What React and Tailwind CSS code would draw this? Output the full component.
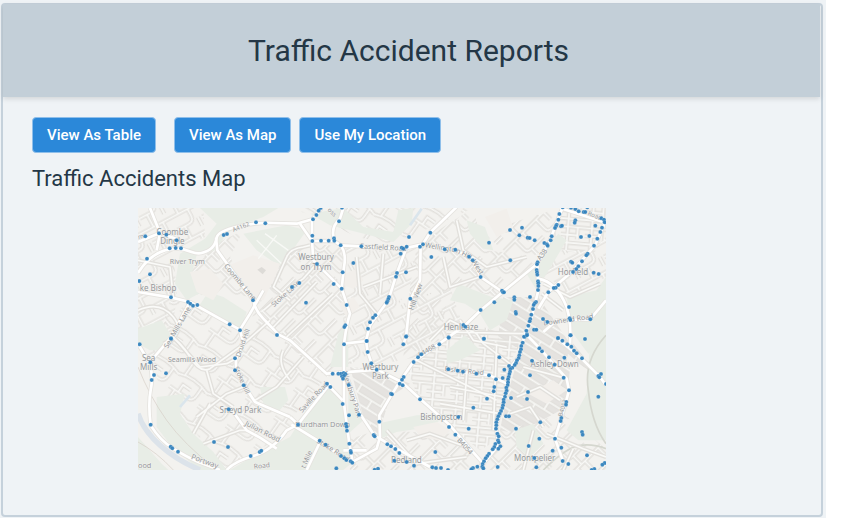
import React from "react";

// Map drawing units: three per CSS pixel.
const VIEW = { x: 24, y: 23, width: 1404, height: 786 };

const GREENS = [
  "M210 23H445L400 50L330 75L290 100L255 150L200 165L185 220L225 270L170 300L135 250L150 160L225 115L260 70Z",
  "M340 100L470 75L530 90L480 160L460 200L430 185L380 150Z",
  "M235 275L280 290L350 335L335 385L300 372L205 320Z",
  "M24 385L95 360L120 400L90 450L60 450L24 430Z",
  "M80 590L165 580L150 640L190 700L250 755L290 809H210L130 745L80 680Z",
  "M24 710L95 790L115 809H24Z",
  "M390 560L465 560L475 600L440 640L400 610Z",
  "M540 40L640 23L700 80L790 95L805 30L850 23L845 70L790 125L720 105L600 75Z",
  "M625 400L655 360V500H600Z",
  "M590 550L645 610L668 786L640 809H300L390 755L480 710L504 672Z",
  "M655 540L670 570L700 660L655 700Z",
  "M1010 60L1065 80L1090 150L1060 145L1020 100Z",
  "M1245 150L1285 100L1310 120L1220 270L1190 220Z",
  "M985 250L1085 290L1150 300L1130 360L1080 390L1050 340L1005 310L960 300Z",
  "M950 450L1005 405L1050 450L990 480L950 490Z",
  "M1310 290L1400 270L1428 230V400L1375 460L1330 400Z",
  "M740 670L860 645L960 640L900 680L800 695L750 715Z",
  "M1380 430L1428 400V720L1345 720L1310 690L1370 580Z",
  "M1155 690L1210 670L1240 730L1200 770L1160 740Z",
];

const OPEN_GROUND = [
  "M285 200L370 165L450 190L440 220L400 300L370 290L310 220Z",
  "M180 215L240 205L280 250L250 300L200 275Z",
  "M635 225L680 205L700 240L670 265L640 255Z",
  "M1065 50L1130 25L1150 85L1100 110Z",
  "M850 680L920 665L960 690L930 720L870 710Z",
  "M1195 580L1270 540L1310 570L1250 610Z",
  "M625 310L670 290L690 320L650 350Z",
];

const DISTRICTS = [
  { fill: "url(#streetsA)", d: "M24 23H220L225 110L130 150L140 280L60 290L24 270Z" },
  { fill: "url(#streetsA)", d: "M24 280L140 300L120 420L60 480L24 430Z" },
  { fill: "url(#streetsB)", d: "M120 300L235 315L330 390L320 470L370 620L480 660V700L380 750L290 809L190 690L90 580L70 470Z" },
  { fill: "url(#streetsC)", d: "M258 130L340 90L300 170L365 290L250 275L160 300L180 215Z" },
  { fill: "url(#streetsC)", d: "M480 150L550 130L650 140L640 410L630 520L590 530L440 410L380 320L400 260Z" },
  { fill: "url(#streetsB)", d: "M380 330L590 530L480 660L370 620L320 480L335 392Z" },
  { fill: "url(#streetsA)", d: "M640 140L860 140L840 260L770 370L720 460L645 500L640 370Z" },
  { fill: "url(#streetsC)", d: "M860 140L940 80L1030 23L1060 150L1170 160L1210 190L1100 290L960 250L930 420L820 470L840 260Z" },
  { fill: "url(#streetsA)", d: "M740 350L860 290L960 260L1000 380L860 470L715 500Z" },
  { fill: "url(#streetsB)", d: "M480 23L560 50L680 110L780 130L860 100L1030 23Z" },
  { fill: "url(#streetsC)", d: "M1060 100L1170 60L1290 23L1240 150L1170 190Z" },
  { fill: "url(#streetsD)", d: "M1298 23H1428V110L1390 160L1260 150Z" },
  { fill: "url(#streetsA)", d: "M1260 150L1390 150L1428 110V230L1320 290L1220 230Z" },
  { fill: "url(#streetsE)", d: "M660 500L742 508L840 550L780 590L740 720L700 650Z" },
  { fill: "url(#streetsE)", d: "M1120 290H1225L1320 430L1300 530L1200 440L1100 440Z" },
  { fill: "url(#streetsD)", d: "M960 410L1060 380L1180 420L1130 500L1100 720L1050 750L960 680L860 580L830 500Z" },
  { fill: "url(#streetsC)", d: "M650 720L740 690L960 700L1060 790V809H660Z" },
  { fill: "url(#streetsE)", d: "M1180 420L1320 500L1310 620L1160 700L1110 690L1130 590Z" },
  { fill: "url(#streetsE)", d: "M1330 430L1420 540L1360 500L1290 440Z" },
  { fill: "url(#streetsC)", d: "M1110 690L1160 680L1300 640L1428 745V809H1060Z" },
];

const ROADS = [
  "M24 218C60 160 100 145 140 145S190 165 215 158S255 140 260 112S370 65 430 68L500 70L547 57L575 23",
  "M258 112L262 150L370 300Q375 330 400 355L445 402L480 420L590 520L640 516",
  "M24 275L125 292L180 305L300 372L330 388L340 430L318 475L318 510L342 555L375 605L480 650",
  "M330 388L360 340L400 270",
  "M180 305L120 415L60 485",
  "M24 430L60 490Q70 530 62 570T62 675Q90 720 130 745T205 785L270 809",
  "M300 622L350 690L390 712L440 745",
  "M290 809Q310 785 370 767T470 690L504 672",
  "M510 70L546 122L546 57M546 122H613L632 135Q650 160 642 200L635 265L660 340Q650 370 642 430V610L658 730L668 786",
  "M546 122L550 180L635 265",
  "M613 122Q600 80 630 55L640 23",
  "M632 135L694 138L820 145L878 132L900 97L980 20",
  "M878 132L945 147L975 147L1025 175L1052 230L1118 275",
  "M830 140L800 220L775 300L720 375L708 420L713 455L725 490L742 508",
  "M640 516L742 508L815 545L870 595L960 675L1020 745L1060 790",
  "M872 132L870 240L840 300L828 410L820 432",
  "M642 430L710 422",
  "M484 672L570 725L665 786L740 745L750 710L748 645L785 583L815 535L850 485L928 430L1005 375L1052 330L1118 275L1222 190L1260 120L1290 40L1298 23",
  "M590 550L638 600M640 750H710",
  "M504 672L600 550M504 672L480 650M530 809L570 725",
  "M655 540L690 640L733 705L800 745L900 800",
  "M1222 190L1225 270L1205 350L1182 410L1170 465L1138 505L1125 595L1098 675L1105 735L1060 790L1055 809",
  "M1225 235Q1280 245 1310 320Q1325 370 1320 430",
  "M1182 395L1230 445L1310 535L1317 570L1305 615L1275 715L1300 785",
  "M1225 325L1255 275L1325 215L1395 135L1428 60M1290 23L1420 65",
  "M1240 395L1280 360L1380 357L1428 300",
  "M1284 415L1355 475L1410 530L1428 555",
  "M960 510L1080 525L1130 550",
  "M60 23L90 98L80 150M24 125L90 98L150 120",
];

// Smaller streets that run between the main roads.
const LANES = [
  "M480 300L430 260L470 170Q480 145 520 140L540 135",
  "M400 330L470 270L520 235L560 190M430 380L560 245M470 410L610 280",
  "M120 410Q150 420 180 470T240 505L330 440L420 360",
  "M130 410L210 500L290 490L318 475M230 510L250 580L310 620",
  "M480 540Q440 490 460 450M375 600L440 560L520 470",
  "M200 650L290 580L340 560M190 700L240 610M220 730L330 690L350 690",
  "M24 330Q90 300 130 350T100 430M24 180L120 200L130 290",
  "M900 420L960 360L1040 400L1060 430L1140 490M950 395L1180 400",
  "M990 360L1030 420L1130 440M860 480L900 500L1100 600",
  "M700 260L860 200M680 170L690 280L740 340M760 160L750 280",
  "M940 170L960 260L1050 230M980 60L1000 150L1070 200L1190 170",
  "M1100 430L1090 690M1010 520L1000 660M960 560L1120 590M930 610L1110 640",
  "M1160 590L1230 560L1290 600M1140 640L1200 620L1240 680M1180 500L1310 535",
  "M830 720L900 700L1010 740M770 690L860 790L1010 770",
  "M1250 700L1360 745L1428 770M1210 690L1180 809M1330 745L1300 809",
  "M1240 250L1320 290L1410 250M1235 280L1300 330",
];

const LABELS = [
  ["Coombe", 127, 105, 0, 24], ["Dingle", 127, 132, 0, 24], ["ke Bishop", 84, 273, 0, 24],
  ["River Trym", 172, 192, 0, 21], ["A4162", 335, 85, -22, 18], ["Coombe Lane", 325, 250, 50, 21],
  ["Stoke Lane", 472, 285, -42, 21], ["Sea Mills Lane", 148, 385, -60, 21], ["m", 34, 114, -12, 18],
  ["Westbury", 558, 180, 0, 24], ["on Trym", 558, 210, 0, 24], ["Eastfield Road", 760, 148, 3, 21],
  ["Hill View", 864, 292, -70, 21],
  ["oss", 602, 40, 45, 18], ["Henleaze", 993, 388, 0, 24], ["Horfield", 1329, 224, 0, 24],
  ["A38", 1242, 167, -55, 21], ["Downend Road", 1316, 365, -8, 21], ["Road", 1392, 52, 22, 18],
  ["Sea", 56, 482, 0, 24], ["Mills", 56, 509, 0, 24], ["Seamills Wood", 186, 485, 0, 21],
  ["Druid Hill", 345, 430, -70, 20], ["Stoke Hill", 330, 542, 66, 20], ["Sneyd Park", 331, 637, 0, 24],
  ["Julian Road", 395, 700, 27, 22], ["Portway", 222, 790, 20, 22], ["ood", 44, 803, 0, 22],
  ["Westbury", 751, 508, 0, 24], ["Park", 751, 536, 0, 24], ["Westbury Park", 660, 585, 72, 21],
  ["Saville Road", 556, 595, -47, 21], ["Durdham Down", 578, 680, 0, 22], ["Stoke Road", 606, 755, 32, 21],
  ["Bishopston", 934, 658, 0, 24], ["Redland", 829, 788, 0, 24], ["A4468", 893, 457, -30, 20],
  ["Ashley Down", 1274, 501, 0, 24], ["Bishop Road", 1002, 518, 6, 20], ["B4054", 1000, 742, 48, 20],
  ["Montpelier", 1214, 783, 0, 24], ["B4052", 1304, 625, -72, 18], ["t Mile", 536, 780, -66, 21],
  ["Road", 396, 803, -6, 20],
];

// Accident markers, grouped by the map section they fall in.
const SECTIONS = [
  { x: 0, y: 0, points: [[46,108],[87,99],[109,103],[140,120],[119,144],[137,143],[153,144],[51,175],[60,222],[28,242],[123,291],[174,305],[181,310],[189,316],[202,314],[281,104],[291,101],[378,66],[406,69],[369,300],[299,372],[330,390],[441,404],[123,414]] },
  { x: 480, y: 0, points: [[92,23],[86,31],[79,44],[69,57],[156,22],[147,63],[67,106],[67,122],[93,121],[116,121],[132,114],[133,121],[152,135],[214,138],[190,188],[81,191],[158,216],[131,251],[155,265],[28,248],[6,260],[48,307],[170,314],[166,375],[163,380],[357,110],[421,97],[335,142],[340,145],[350,139],[332,160],[390,139],[399,132],[464,147],[424,170],[321,218],[318,229],[348,216],[297,290],[295,296],[292,303],[290,307],[361,295],[256,345],[249,352],[240,366],[234,385],[349,408],[476,411],[230,422]] },
  { x: 960, y: 0, points: [[16,148],[57,169],[68,180],[92,230],[117,127],[180,89],[216,82],[208,105],[233,112],[239,113],[254,120],[181,180],[156,271],[159,276],[162,276],[133,306],[92,329],[40,374],[46,379],[101,415],[193,291],[193,298],[197,335],[198,340],[240,290],[338,21],[363,22],[376,26],[386,33],[401,35],[406,35],[412,21],[328,41],[325,58],[320,73],[318,77],[315,83],[333,78],[336,76],[376,60],[374,67],[305,108],[302,120],[283,128],[291,132],[293,136],[454,54],[462,58],[464,66],[436,76],[456,82],[451,95],[418,107],[393,110],[442,115],[432,136],[413,160],[409,165],[396,183],[385,198],[379,206],[369,215],[363,184],[367,187],[431,217],[446,221],[263,186],[261,192],[260,209],[261,216],[262,223],[264,243],[265,249],[265,257],[264,269],[325,254],[317,262],[311,263],[295,276],[357,320],[359,354],[361,359],[421,357],[361,405],[279,356],[292,365],[258,305],[254,309],[251,314],[249,326],[244,343],[241,356],[239,363],[235,376],[229,391],[231,402],[224,409],[252,388],[259,388],[324,414]] },
  { x: 0, y: 405, points: [[29,27],[123,10],[61,81],[72,119],[65,134],[108,114],[315,69],[315,105],[341,150],[296,222],[62,268],[122,334],[127,339],[144,349],[252,320],[294,335],[362,362],[389,350],[394,346]] },
  { x: 480, y: 405, points: [[162,27],[230,17],[233,50],[244,84],[260,103],[348,4],[340,27],[448,27],[476,7],[394,57],[384,66],[371,80],[475,102],[128,115],[145,115],[153,115],[161,113],[166,116],[156,123],[162,121],[159,130],[176,149],[111,145],[121,155],[341,125],[336,133],[329,145],[338,150],[303,175],[306,177],[390,192],[158,206],[177,240],[207,238],[268,259],[24,268],[168,266],[170,274],[171,286],[251,299],[254,303],[89,316],[107,328],[178,325],[182,347],[183,352],[292,327],[303,333],[316,341],[328,353],[436,350],[153,362],[163,369],[169,374],[182,378],[187,382],[139,399],[254,403],[264,400],[313,376],[350,380],[372,391],[427,396],[438,398],[453,398],[474,404],[477,275]] },
  { x: 960, y: 405, points: [[102,10],[222,4],[231,0],[148,66],[23,106],[39,109],[79,115],[117,120],[163,103],[138,132],[158,128],[133,155],[131,168],[111,190],[70,217],[25,245],[56,280],[16,298],[218,22],[214,32],[213,42],[210,50],[208,60],[206,68],[201,75],[198,83],[194,89],[187,97],[177,92],[181,101],[180,109],[178,116],[176,125],[174,132],[174,141],[173,149],[169,157],[170,166],[167,174],[165,184],[161,193],[161,201],[159,210],[157,218],[153,227],[149,235],[145,243],[142,252],[139,261],[139,270],[138,280],[142,295],[146,303],[144,315],[146,321],[151,333],[145,340],[136,326],[133,335],[128,342],[117,355],[112,362],[107,369],[102,378],[98,386],[97,394],[100,399],[82,394],[69,398],[64,402],[143,395],[168,243],[177,243],[183,188],[234,170],[231,191],[240,120],[246,76],[198,280],[271,261],[268,310],[236,332],[253,368],[259,396],[315,310],[308,346],[334,337],[338,377],[355,386],[268,39],[276,48],[297,66],[343,67],[314,88],[341,127],[357,165],[349,200],[348,208],[334,248],[332,257],[324,8],[337,16],[352,27],[364,34],[372,46],[380,54],[396,69],[362,0],[405,11],[445,122],[453,116],[448,126],[445,184],[396,290],[398,298],[411,360],[464,383],[457,388],[433,401],[425,404],[468,146]] },
];

function Streets({ id, angle, size, d, built }) {
  return (
    <pattern
      id={id}
      width={size}
      height={size}
      patternUnits="userSpaceOnUse"
      patternTransform={`rotate(${angle})`}
    >
      {built && <rect width={size} height={size} fill="#e5e3e0" />}
      <path d={d} fill="none" stroke="#e2e0dc" strokeWidth="13" />
      <path d={d} fill="none" stroke="#f8f8f6" strokeWidth="5" />
    </pattern>
  );
}

function AccidentMap() {
  return (
    <svg
      role="img"
      aria-label="Map of traffic accidents"
      viewBox={`${VIEW.x} ${VIEW.y} ${VIEW.width} ${VIEW.height}`}
      className="block w-full"
    >
      <defs>
        <Streets id="streetsA" angle={-28} size={84} d="M0 20H84M0 62H34Q56 62 56 44V20M25 62V84M25 0V20M72 84V56" />
        <Streets id="streetsB" angle={35} size={104} d="M0 30Q50 10 104 30M0 76H66Q84 76 84 52V25M32 76V50H60M20 76V104M20 0V26" />
        <Streets id="streetsC" angle={-45} size={88} d="M0 22H88M28 22V60Q28 74 46 74H88M0 74H8M60 22V52M46 74V88M46 0V22" />
        <Streets id="streetsD" angle={5} size={72} d="M0 12H72M0 36H72M0 60H50M20 12V72M50 36V72M20 0V12" />
        <Streets id="streetsE" angle={32} size={84} d="M0 15H84M0 42H84M0 70H84M42 15V42M10 42V70" built />
      </defs>
      <rect x="24" y="23" width="1404" height="786" fill="#f3f2ef" />
      {DISTRICTS.map(({ d, fill }) => (
        <path key={d} d={d} fill={fill} />
      ))}
      {GREENS.map((d) => (
        <path key={d} d={d} fill="#e8ede6" />
      ))}
      {OPEN_GROUND.map((d) => (
        <path key={d} d={d} fill="#f2efeb" />
      ))}
      <g fill="none">
        <path d="M24 640Q40 690 90 735T210 809" stroke="#dce3ea" strokeWidth="16" />
        <path d="M840 75L875 25M150 620L180 585" stroke="#dae5ec" strokeWidth="8" />
        <path d="M24 500Q60 590 110 660T260 809M24 725Q80 755 130 809" stroke="#d4cdc6" strokeWidth="2" />
        <path d="M1428 405Q1360 480 1375 570Q1385 670 1428 730M1240 809Q1310 740 1350 735T1428 745" stroke="#d5d7cf" strokeWidth="5" />
        <path d="M380 120L455 190M385 175L440 105M405 100L475 150" stroke="#f8f9f6" strokeWidth="4" />
        <path d="M382 208L395 200L408 210L398 222Z" fill="#dddbd7" />
      </g>
      <g fill="none" strokeLinejoin="round">
        {LANES.map((d) => (
          <path key={d} d={d} stroke="#e2e0dc" strokeWidth="13" />
        ))}
        {ROADS.map((d) => (
          <path key={d} d={d} stroke="#e5e3df" strokeWidth="13" />
        ))}
        {LANES.map((d) => (
          <path key={d} d={d} stroke="#fafaf8" strokeWidth="5" />
        ))}
        {ROADS.map((d) => (
          <path key={d} d={d} stroke="#ffffff" strokeWidth="8" />
        ))}
      </g>
      <g
        className="font-['Noto_Sans',sans-serif]"
        fill="#96999c"
        stroke="#f3f2ef"
        strokeWidth="3"
        paintOrder="stroke"
        textAnchor="middle"
      >
        {LABELS.map(([name, x, y, angle, size]) => (
          <text key={`${name}-${x}-${y}`} fontSize={size} transform={`translate(${x} ${y}) rotate(${angle})`}>
            {name}
          </text>
        ))}
        <path id="wellington" d="M884 141L975 155L1020 178L1060 240" fill="none" stroke="none" />
        <text fontSize="21" textAnchor="start">
          <textPath href="#wellington">Wellington Hill West</textPath>
        </text>
      </g>
      {SECTIONS.map((section) => (
        <g
          key={`${section.x}-${section.y}`}
          transform={`translate(${section.x} ${section.y})`}
          fill="#3182bd"
          fillOpacity="0.95"
          stroke="#ffffff"
          strokeOpacity="0.5"
          strokeWidth="1"
        >
          {section.points.map(([x, y], index) => (
            <circle key={index} cx={x} cy={y} r="6" />
          ))}
        </g>
      ))}
    </svg>
  );
}

function ActionButton({ children }) {
  return (
    <button
      type="button"
      className="h-9 rounded-[4px] border border-[#8fbfea] bg-[#2b88d9] px-3.5 text-[15px] font-medium leading-5 text-white"
    >
      {children}
    </button>
  );
}

export default function App() {
  return (
    <div className="mr-[26px] bg-[#eff3f6] pt-[3px] pr-[3px] pb-px pl-px font-[Roboto,'Liberation_Sans',sans-serif] text-[#243746]">
      <main className="rounded-[4px] border-2 border-[#c5d1db] pr-px pb-[45px]">
        <header className="-mt-px bg-[#c3cfd8] py-[27px] pr-1.5 text-center shadow-[0_2px_5px_rgba(0,0,0,0.12)]">
          <h1 className="text-[30px] leading-[39px]">Traffic Accident Reports</h1>
        </header>
        <div className="px-[29px] pt-5">
          <div className="flex flex-wrap gap-2">
            <div className="mr-2.5 flex">
              <ActionButton>View As Table</ActionButton>
            </div>
            <ActionButton>View As Map</ActionButton>
            <ActionButton>Use My Location</ActionButton>
          </div>
          <h2 className="mt-3 text-[22px] leading-7">Traffic Accidents Map</h2>
          <div className="mt-[15px] ml-[106px] max-w-[468px]">
            <AccidentMap />
          </div>
        </div>
      </main>
    </div>
  );
}
